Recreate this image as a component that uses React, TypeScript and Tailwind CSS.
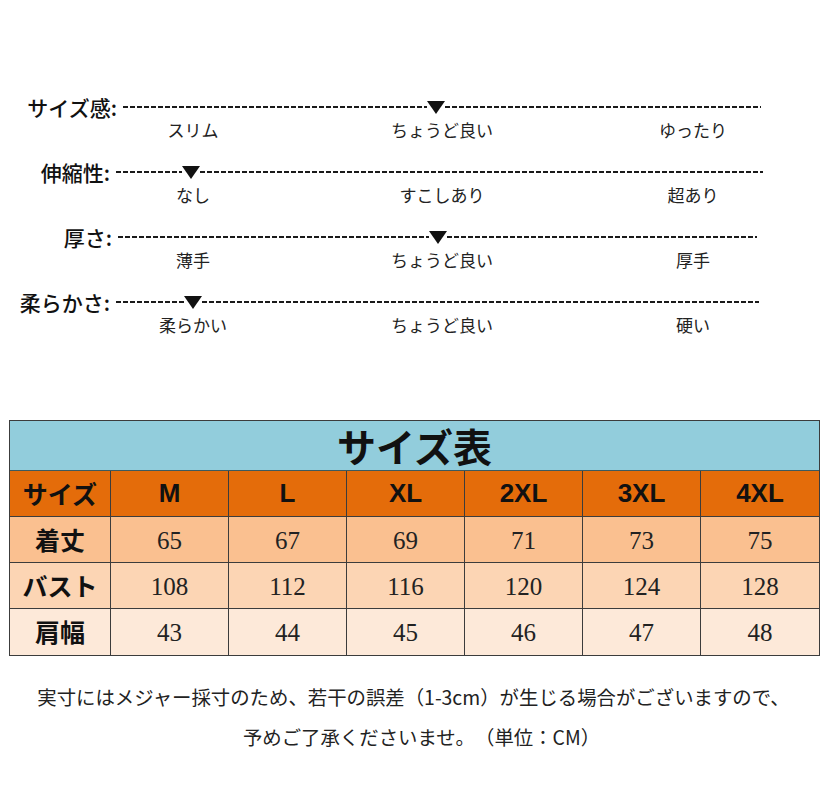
import React from 'react';

const jp = "font-['Noto_Sans_CJK_JP','Noto_Sans',sans-serif]";

type FeelRow = {
  label: string;
  labelW: string; // where the colon ends
  lineW: string; // full line width
  leftW: string; // dashes before the marker
  marks: [string, string, string];
};

const feelRows: FeelRow[] = [
  { label: 'サイズ感:', labelW: 'w-[117px]', lineW: 'w-[638px]', leftW: 'w-[304px]', marks: ['スリム', 'ちょうど良い', 'ゆったり'] },
  { label: '伸縮性:', labelW: 'w-[110px]', lineW: 'w-[647px]', leftW: 'w-[66px]', marks: ['なし', 'すこしあり', '超あり'] },
  { label: '厚さ:', labelW: 'w-[112px]', lineW: 'w-[639px]', leftW: 'w-[311px]', marks: ['薄手', 'ちょうど良い', '厚手'] },
  { label: '柔らかさ:', labelW: 'w-[110px]', lineW: 'w-[643px]', leftW: 'w-[68px]', marks: ['柔らかい', 'ちょうど良い', '硬い'] },
];

const dashes = 'h-[2px] bg-[image:repeating-linear-gradient(90deg,#1a1a1a_0_5px,transparent_5px_7px)]';

const sizes = ['M', 'L', 'XL', '2XL', '3XL', '4XL'];

const tableRows = [
  { name: '着丈', bg: 'bg-[#fac090]', values: [65, 67, 69, 71, 73, 75] },
  { name: 'バスト', bg: 'bg-[#fcd5b4]', values: [108, 112, 116, 120, 124, 128] },
  { name: '肩幅', bg: 'bg-[#fde9d9]', values: [43, 44, 45, 46, 47, 48] },
];

const Marker = () => (
  <svg width="18" height="13" viewBox="0 0 18 13" className="shrink-0">
    <polygon points="0,0 18,0 9,13" fill="#111" />
  </svg>
);

const App = () => {
  return (
    <div className={`w-[827px] min-h-[800px] bg-white text-[#111] ${jp}`}>
      {/* feel scales */}
      <section className="pt-[97px]">
        {feelRows.map((row) => (
          <div key={row.label} className="h-[65px]">
            <div className="flex h-5 items-center">
              <div className={`${row.labelW} shrink-0 whitespace-nowrap text-right text-[21px] font-medium leading-5`}>{row.label}</div>
              <div className={`ml-[6px] flex items-center ${row.lineW}`}>
                <div className={`${row.leftW} ${dashes}`} />
                <Marker />
                <div className={`flex-1 ${dashes}`} />
              </div>
            </div>
            <div className="mt-[3px] flex h-5 items-center pl-[143px] text-[17px] leading-5 text-[#222]">
              <div className="w-[100px] text-center">{row.marks[0]}</div>
              <div className="ml-[129px] w-[140px] text-center">{row.marks[1]}</div>
              <div className="ml-[131px] w-[100px] text-center">{row.marks[2]}</div>
            </div>
          </div>
        ))}
      </section>

      {/* size table */}
      <div className="ml-[9px] mt-[63px] w-[811px] border border-[#3c3c3c]">
        <div className="flex h-[50px] items-center justify-center border-b border-[#3c5a60] bg-[#92cddc] text-[39px] font-bold leading-none">
          サイズ表
        </div>
        <div className="grid h-[46px] grid-cols-[101px_repeat(6,118px)] border-b border-[#3c3c3c] bg-[#e46c0a]">
          <div className="flex items-center justify-center border-r border-[#3c3c3c] text-[25px] font-bold">サイズ</div>
          {sizes.map((s, i) => (
            <div
              key={s}
              className={`flex items-center justify-center font-['Liberation_Sans',sans-serif] text-[26px] font-bold ${i < 5 ? 'border-r border-[#3c3c3c]' : ''}`}
            >
              {s}
            </div>
          ))}
        </div>
        {tableRows.map((row, r) => (
          <div
            key={row.name}
            className={`grid h-[46px] grid-cols-[101px_repeat(6,118px)] ${row.bg} ${r < 2 ? 'border-b border-[#3c3c3c]' : ''}`}
          >
            <div className="flex items-center justify-center border-r border-[#3c3c3c] text-[25px] font-bold">{row.name}</div>
            {row.values.map((v, i) => (
              <div
                key={i}
                className={`flex items-center justify-center pt-[2px] font-['Liberation_Serif',serif] text-[25px] text-[#222] ${i < 5 ? 'border-r border-[#3c3c3c]' : ''}`}
              >
                {v}
              </div>
            ))}
          </div>
        ))}
      </div>

      {/* note */}
      <div className="mt-[21px] text-center text-[19.4px] leading-[40px] text-[#222] [text-spacing-trim:space-all]">
        <p>実寸にはメジャー採寸のため、若干の誤差（1-3cm）が生じる場合がございますので、</p>
        <p className="pl-[16px]">予めご了承くださいませ。（単位：CM）</p>
      </div>
    </div>
  );
};

export default App;
